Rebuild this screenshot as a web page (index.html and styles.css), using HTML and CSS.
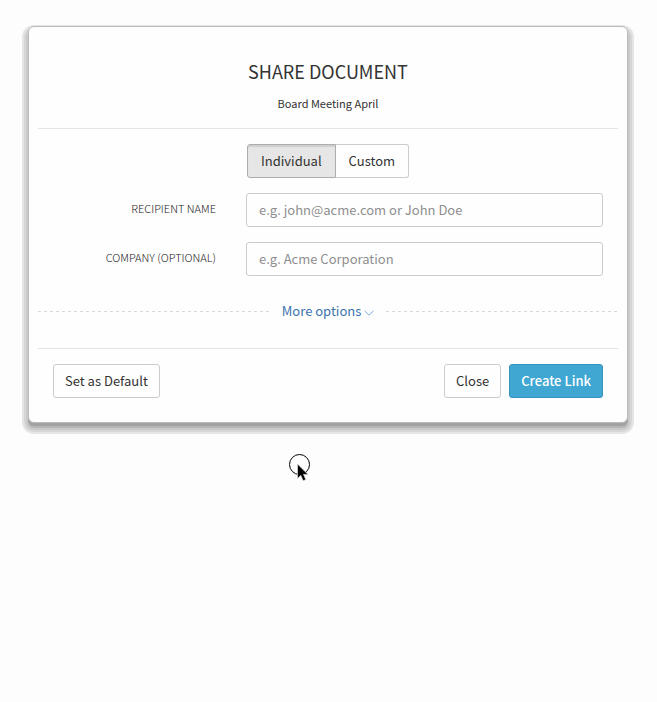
FILE: index.html
```html
<!DOCTYPE html>
<html lang="en">
<head>
<meta charset="utf-8">
<meta name="viewport" content="width=device-width, initial-scale=1">
<title>Share Document</title>
<link rel="stylesheet" href="styles.css">
</head>
<body>
<main class="dialog">
  <header class="dialog-header">
    <h1 class="title">SHARE DOCUMENT</h1>
    <p class="subtitle">Board Meeting April</p>
  </header>
  <form class="dialog-body">
    <div class="toggle">
      <button class="btn toggle-first active" type="button" aria-pressed="true">Individual</button>
      <button class="btn toggle-last" type="button" aria-pressed="false">Custom</button>
    </div>
    <div class="field">
      <label class="label" for="recipient">RECIPIENT NAME</label>
      <input class="input" id="recipient" type="text" placeholder="e.g. john@acme.com or John Doe">
    </div>
    <div class="field">
      <label class="label" for="company">COMPANY (OPTIONAL)</label>
      <input class="input" id="company" type="text" placeholder="e.g. Acme Corporation">
    </div>
    <div class="more">
      <a class="more-link" href="#">More options
        <svg class="chevron" viewBox="0 0 10 6" aria-hidden="true"><path d="M0.5 0.8 5 5.2 9.5 0.8"/></svg>
      </a>
    </div>
  </form>
  <footer class="dialog-footer">
    <button class="btn" type="button">Set as Default</button>
    <div class="actions">
      <button class="btn" type="button">Close</button>
      <button class="btn primary" type="button">Create Link</button>
    </div>
  </footer>
</main>
<svg class="pointer" viewBox="0 0 24 30" aria-hidden="true">
  <circle class="pointer-ring" cx="11.5" cy="11.5" r="10"/>
  <path class="pointer-arrow" d="M9.5 11v14.5l3.3-3.1 2.4 5.3 2.6-1.1-2.3-5.2h4.5z"/>
</svg>
</body>
</html>
```

FILE: styles.css
```css
* {
  box-sizing: border-box;
}

body {
  min-height: 100vh;
  margin: 0;
  padding: 26px 29px 26px 28px;
  background: #fdfdfd;
  color: #333;
  font: 13px/20px "Noto Sans CJK SC", "Noto Sans", sans-serif;
}

.dialog {
  padding: 0 9px;
  border: 1px solid #bbb;
  border-radius: 6px;
  background: #fefefe;
  box-shadow:
    0 3px 0 0 #a2a2a2,
    0 5px 0 0 #b6b6b6,
    0 5px 0 2px #c9c9c9,
    0 5px 0 4px #d6d6d6,
    0 5px 0 6px #e5e5e5;
}

.dialog-header {
  padding: 31px 0 15px;
  border-bottom: 1px solid #e5e5e5;
  text-align: center;
}

.title {
  margin: 0 0 10px;
  font-size: 18px;
  font-weight: 400;
  line-height: 26px;
}

.subtitle {
  margin: 0;
  font-size: 11px;
  line-height: 19px;
}

.dialog-body {
  padding: 15px 0 27px;
}

.toggle {
  display: flex;
  justify-content: center;
  margin-bottom: 15px;
}

.btn {
  height: 34px;
  padding: 0 11px;
  border: 1px solid #ccc;
  border-radius: 3px;
  background: #fefefe;
  color: #333;
  font: inherit;
}

.toggle .btn {
  padding: 0 13px;
}

.toggle .toggle-first {
  border-radius: 3px 0 0 3px;
}

.toggle .toggle-last {
  border-left: 0;
  border-radius: 0 3px 3px 0;
}

.active {
  border-color: #adadad;
  background: #e6e6e6;
  box-shadow: inset 0 2px 1px #cfcfcf;
}

.primary {
  border-color: #3594bf;
  background: #40a6d2;
  color: #fff;
  font-weight: 500;
}

.field {
  display: grid;
  grid-template-columns: 178px 1fr;
  gap: 30px;
  margin: 0 15px 15px 0;
}

.label {
  padding-top: 5px;
  color: #222;
  font-size: 11px;
  font-weight: 300;
  text-align: right;
}

.input {
  width: 100%;
  height: 34px;
  padding: 0 12px 2px;
  border: 1px solid #ccc;
  border-radius: 3px;
  background: #fefefe;
  color: #555;
  font: inherit;
}

.input::placeholder {
  color: #8e8e8e;
  opacity: 1;
}

.more {
  display: flex;
  align-items: center;
  margin-top: 25px;
}

.more::before,
.more::after {
  content: "";
  flex: 1;
  height: 1px;
  background: repeating-linear-gradient(90deg, #d8d8d8 0 3px, transparent 3px 6px);
}

.more-link {
  padding: 0 12px;
  color: #3b73af;
  text-decoration: none;
}

.chevron {
  width: 10px;
  height: 6px;
  fill: none;
  stroke: #79aede;
}

.dialog-footer {
  display: flex;
  justify-content: space-between;
  padding: 15px 15px 24px;
  border-top: 1px solid #e5e5e5;
}

.actions {
  display: flex;
  gap: 8px;
}

.pointer {
  position: absolute;
  top: 453px;
  left: 288px;
  width: 24px;
  height: 30px;
}

.pointer-ring {
  fill: none;
  stroke: #000;
}

.pointer-arrow {
  stroke: #ddd;
  stroke-width: 0.7;
}
```
